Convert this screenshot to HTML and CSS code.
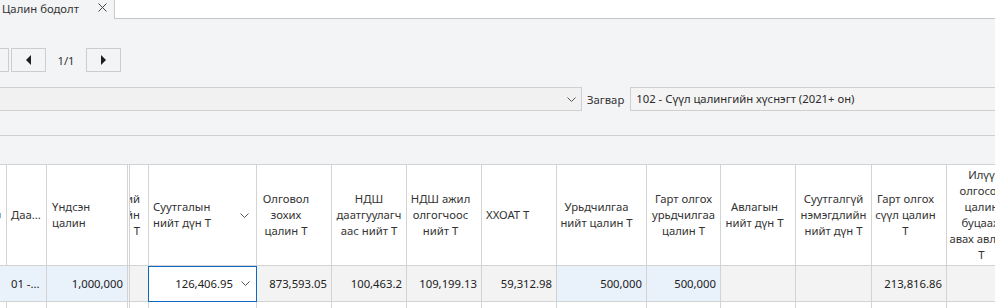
FILE: index.html
```html
<!DOCTYPE html>
<html lang="mn">
<head>
<meta charset="utf-8">
<title>Цалин бодолт</title>
<link rel="stylesheet" href="styles.css">
</head>
<body>
<div class="tabbar">
  <div class="tab">
    <span class="tab-title">Цалин бодолт</span>
    <svg class="tab-close" width="9" height="9" viewBox="0 0 9 9"><path d="M0.5 0.5 L8.5 8.5 M8.5 0.5 L0.5 8.5" stroke="#444" stroke-width="1" fill="none"/></svg>
  </div>
  <div class="tab-rest"></div>
</div>

<div class="pager">
  <button class="pg-btn pg-btn--cut"></button>
  <button class="pg-btn"><svg width="5" height="10" viewBox="0 0 5 10"><polygon points="5,0 0,5 5,10" fill="#1f1f1f"/></svg></button>
  <span class="pg-label">1/1</span>
  <button class="pg-btn"><svg width="5" height="10" viewBox="0 0 5 10"><polygon points="0,0 5,5 0,10" fill="#1f1f1f"/></svg></button>
</div>

<div class="filters">
  <div class="combo">
    <svg class="chev" width="9" height="5" viewBox="0 0 9 5"><polyline points="0.5,0.5 4.5,4.5 8.5,0.5" fill="none" stroke="#555" stroke-width="1"/></svg>
  </div>
  <span class="filter-label">Загвар</span>
  <div class="select">102 - Сүүл цалингийн хүснэгт (2021+ он)</div>
</div>

<div class="divider"></div>

<div class="grid">
  <!-- header -->
  <div class="hc hc-first"><span class="mark"></span></div>
  <div class="hc hc-left">Даа...</div>
  <div class="hc hc-left hc-wide c-nobr">Үндсэн<br>цалин</div>
  <div class="hc hc-cut c-dbl"><span>ний</span><span>ийн</span><span>Т</span></div>
  <div class="hc hc-left hc-drop"><span>Суутгалын<br>нийт дүн Т</span><svg class="chev" width="9" height="5" viewBox="0 0 9 5"><polyline points="0.5,0.5 4.5,4.5 8.5,0.5" fill="none" stroke="#555" stroke-width="1"/></svg></div>
  <div class="hc hc-shift">Олговол<br>зохих<br>цалин Т</div>
  <div class="hc">НДШ<br>даатгуулагч<br>аас нийт Т</div>
  <div class="hc hc-nudge">НДШ ажил<br>олгогчоос<br>нийт Т</div>
  <div class="hc hc-left">ХХОАТ Т</div>
  <div class="hc hc-nudge2">Урьдчилгаа<br>нийт цалин Т</div>
  <div class="hc">Гарт олгох<br>урьдчилгаа<br>цалин Т</div>
  <div class="hc hc-nudge">Авлагын<br>нийт дүн Т</div>
  <div class="hc">Суутгалгүй<br>нэмэгдлийн<br>нийт дүн Т</div>
  <div class="hc hc-nudge">Гарт олгох<br>сүүл цалин<br>Т</div>
  <div class="hc">Илүү<br>олгосон<br>цалин<br>буцааж<br>авах авлага<br>Т</div>

  <!-- data row -->
  <div class="dc dc-blue"></div>
  <div class="dc dc-blue dc-left">01 -...</div>
  <div class="dc dc-blue c-nobr">1,000,000</div>
  <div class="dc dc-grey c-dbl"></div>
  <div class="dc dc-sel"><span>126,406.95</span><svg class="chev" width="9" height="5" viewBox="0 0 9 5"><polyline points="0.5,0.5 4.5,4.5 8.5,0.5" fill="none" stroke="#555" stroke-width="1"/></svg></div>
  <div class="dc dc-grey">873,593.05</div>
  <div class="dc dc-grey">100,463.2</div>
  <div class="dc dc-grey">109,199.13</div>
  <div class="dc dc-grey">59,312.98</div>
  <div class="dc dc-blue">500,000</div>
  <div class="dc dc-blue">500,000</div>
  <div class="dc dc-grey"></div>
  <div class="dc dc-grey"></div>
  <div class="dc dc-grey">213,816.86</div>
  <div class="dc dc-grey"></div>

  <!-- filler -->
  <div class="fc"></div>
  <div class="fc"></div>
  <div class="fc c-nobr"></div>
  <div class="fc c-dbl"></div>
  <div class="fc"></div>
  <div class="fc"></div>
  <div class="fc"></div>
  <div class="fc"></div>
  <div class="fc"></div>
  <div class="fc"></div>
  <div class="fc"></div>
  <div class="fc"></div>
  <div class="fc"></div>
  <div class="fc"></div>
  <div class="fc"></div>
</div>
</body>
</html>
```

FILE: styles.css
```css
html, body {
  margin: 0;
  padding: 0;
  overflow: hidden;
}
body {
  background: #f3f4f6;
  font-family: "Noto Sans", "Open Sans", sans-serif;
  font-size: 11.3px;
  color: #2b2b2b;
  width: 995px;
  height: 308px;
}

/* tab bar */
.tabbar {
  display: flex;
  height: 19px;
}
.tab {
  width: 114px;
  height: 19px;
  border-right: 1px solid #c9c9c9;
  background: #f3f4f6;
  display: flex;
  align-items: flex-start;
  box-sizing: content-box;
}
.tab-title {
  padding-left: 2px;
  line-height: 17px;
  color: #333;
}
.tab-close {
  margin-left: auto;
  margin-right: 7px;
  margin-top: 3px;
}
.tab-rest {
  flex: 1;
  background: #fff;
  border-bottom: 1px solid #c6c6c6;
  box-sizing: border-box;
}

/* pager */
.pager {
  display: flex;
  align-items: center;
  margin-top: 29px;
  height: 24px;
}
.pg-btn {
  width: 35px;
  height: 24px;
  box-sizing: border-box;
  border: 1px solid #cdcdcd;
  background: #f3f4f6;
  padding: 0;
  margin: 0;
  display: flex;
  align-items: center;
  justify-content: center;
}
.pg-btn--cut {
  width: 9px;
  border-left: none;
  margin-right: 2px;
}
.pg-label {
  width: 40px;
  text-align: center;
  color: #333;
}

/* filters */
.filters {
  display: flex;
  align-items: center;
  margin-top: 15px;
  height: 24px;
}
.combo {
  width: 582px;
  height: 24px;
  box-sizing: border-box;
  border: 1px solid #cfcfcf;
  border-left: none;
  background: #f1f1f1;
  display: flex;
  align-items: center;
  justify-content: flex-end;
  padding-right: 5px;
}
.filter-label {
  margin-left: 5px;
  margin-right: 6px;
  color: #333;
}
.select {
  flex: 1;
  height: 24px;
  box-sizing: border-box;
  border: 1px solid #cfcfcf;
  border-right: none;
  background: #f4f4f4;
  line-height: 22px;
  padding-left: 5px;
  color: #2b2b2b;
}

.divider {
  margin-top: 24px;
  border-top: 1px solid #cfcfcf;
}

/* grid */
.grid {
  margin-top: 28px;
  display: grid;
  grid-template-columns: 7px 40px 80px 22px 108px 75px 75px 75px 75px 90px 74px 75px 76px 75px 70px;
  grid-template-rows: 101px 36px 20px;
  width: 1017px;
  border-top: 1px solid #d3d3d3;
  background: #fff;
}
.hc, .dc, .fc {
  box-sizing: border-box;
  border-right: 1px solid #d3d3d3;
  border-bottom: 1px solid #d3d3d3;
  overflow: hidden;
}
.fc { border-bottom: none; }
.c-nobr { border-right: none; }
.c-dbl { border-left: 3px double #d3d3d3; }

.hc {
  background: #fff;
  display: flex;
  align-items: center;
  justify-content: center;
  text-align: center;
  line-height: 16px;
  color: #333;
  padding: 0 4px;
  white-space: nowrap;
}
.hc-first {
  justify-content: flex-start;
  padding: 0;
}
.mark {
  width: 1px;
  height: 5px;
  background: #7fb0e0;
}
.hc-left {
  justify-content: flex-start;
  text-align: left;
}
.hc-wide { padding-left: 5px; }
.hc-cut {
  flex-direction: column;
  align-items: flex-end;
  justify-content: center;
  padding: 0 8px 0 0;
}
.hc-drop {
  justify-content: space-between;
  padding-right: 7px;
}
.hc-shift { padding-right: 20px; }
.hc-nudge { padding-right: 11px; }
.hc-nudge2 { padding-right: 14px; }

.dc {
  display: flex;
  align-items: center;
  justify-content: flex-end;
  padding: 0 4px;
  color: #222;
  white-space: nowrap;
}
.dc-left { justify-content: flex-start; }
.dc-blue { background: #e9f1fb; }
.dc-grey { background: #f3f3f3; }
.dc-sel {
  background: #fff;
  border-color: #1068c5;
  box-shadow: inset 0 1px 0 #1068c5, -1px 0 0 #1068c5;
  padding-right: 6px;
}
.dc-sel .chev { margin-left: 8px; }
.fc { background: #fff; }
```
